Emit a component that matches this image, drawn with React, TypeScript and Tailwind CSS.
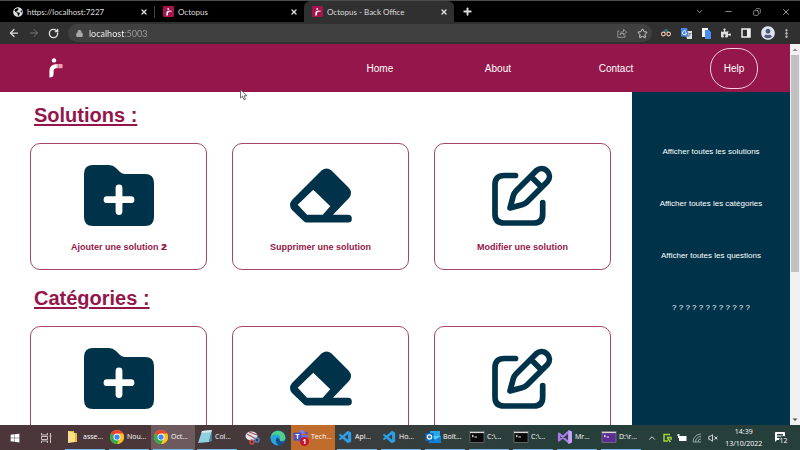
import type { ReactNode } from "react";
import {
  ArrowLeft,
  ArrowRight,
  RotateCw,
  Lock,
  X,
  Plus,
  Star,
  ChevronDown,
  ChevronUp,
  Minus,
  Copy,
  MoreVertical,
  VolumeX,
} from "lucide-react";
import { FaPuzzlePiece, FaUserCircle, FaWindows, FaGlobeAmericas } from "react-icons/fa";
import { VscVscode } from "react-icons/vsc";
import { MdMessage } from "react-icons/md";

function OctopusMark({ className }: { className: string }) {
  return (
    <svg viewBox="0 0 14 20" className={className} aria-hidden="true">
      <circle cx="5" cy="2.4" r="2.2" fill="#fff" />
      <path d="M0.400 19.500V13Q0.400 6 8.500 6V10Q4.800 10 4.600 13V16Q4.600 19.500 0.400 19.500Z" fill="#fff" />
      <path d="M7.500 6H9.400V10.200H7.500Z" fill="#d9b3c4" />
      <rect x="9.4" y="6" width="4.2" height="4.2" rx="0.8" fill="#f3a0ae" />
    </svg>
  );
}

function Favicon() {
  return (
    <span className="flex size-[11px] shrink-0 items-center justify-center rounded-[1px] bg-[#a3154e]">
      <OctopusMark className="h-2 w-[6px]" />
    </span>
  );
}

function BrowserTab({ icon, title, active }: { icon: ReactNode; title: string; active?: boolean }) {
  return (
    <div
      className={
        active
          ? "flex h-full w-[150px] items-center gap-1 rounded-t-md bg-[#303030] pr-[6px] pl-2"
          : "flex h-full w-[149px] items-center gap-1 pr-[6px] pl-2"
      }
    >
      {icon}
      <span className="flex-1 truncate">{title}</span>
      <button aria-label="Fermer l'onglet">
        <X size={8} strokeWidth={4} />
      </button>
    </div>
  );
}

function ChromeLogo() {
  return (
    <svg viewBox="0 0 16 16" className="size-[14px]" aria-hidden="true">
      <circle cx="8" cy="8" r="8" fill="#fbc116" />
      <path d="M8 8 1.1 4A8 8 0 0 1 14.9 4Z" fill="#ea4335" />
      <path d="M1.1 4A8 8 0 0 0 8 16L11.4 10 8 8Z" fill="#34a853" />
      <path d="M8 4H14.9A8 8 0 0 1 8 16L11.4 10Z" fill="#fbc116" />
      <circle cx="8" cy="8" r="4" fill="#fff" />
      <circle cx="8" cy="8" r="3" fill="#4285f4" />
    </svg>
  );
}

function FolderPlusIcon() {
  return (
    <svg viewBox="0 0 70 61" className="h-[61px] w-[70px]" aria-hidden="true">
      <path
        d="M9 0H25Q29 0 32 3L36 7Q38 9 41 9H61Q70 9 70 18V52Q70 61 61 61H9Q0 61 0 52V9Q0 0 9 0Z"
        fill="#003349"
      />
      <path d="M35 23V46.500M23 34.700H47" stroke="#fff" strokeWidth="6.800" strokeLinecap="round" />
    </svg>
  );
}

function EraserIcon() {
  return (
    <svg viewBox="0 -3.500 62 61" className="h-[61px] w-[62px]" aria-hidden="true">
      <path
        fillRule="evenodd"
        fill="#003349"
        d="M31.500 2Q36.700-2 41.500 2L59 19.500Q63 24.500 59 29.500L43 46.300H58A3.850 3.850 0 0 1 58 54H17Q15 54 13.500 52.500L2 41.500Q-2 36.500 2 31.500ZM23.300 21.300L7.700 36.300L17 46.300H32.700L40.300 37.700Z"
      />
    </svg>
  );
}

function EditIcon() {
  return (
    <svg
      viewBox="0 0 61 61"
      className="size-[61px]"
      fill="none"
      stroke="#003349"
      strokeWidth="5.700"
      strokeLinecap="round"
      strokeLinejoin="round"
      aria-hidden="true"
    >
      <path d="M23.500 10.500H12Q3 10.500 3 19.500V49Q3 58 12 58H42Q50.700 58 50.700 49V37.500" />
      <path d="M44.500 5.500L24 26Q22 28 21.200 31L18 43L30 39.800Q33 39 35 37L55.500 16.500A7.800 7.800 0 0 0 44.500 5.500ZM39 11.500L49.500 22" />
    </svg>
  );
}

function ActionCard({ icon, name, label }: { icon: ReactNode; name: string; label?: ReactNode }) {
  return (
    <button
      aria-label={name}
      className="flex h-[127px] flex-1 flex-col items-center gap-[15px] rounded-[10px] border border-[#a3476c] pt-[21px] text-[9px] leading-3 font-bold text-[#94164a]"
    >
      {icon}
      {label && <span>{label}</span>}
    </button>
  );
}

function Section({ title, children }: { title: string; children: ReactNode }) {
  return (
    <section>
      <h2 className="px-1 text-[20px] leading-6 font-bold text-[#94164a] underline decoration-2 underline-offset-2">
        {title}
      </h2>
      <div className="mt-4 flex gap-[25px]">{children}</div>
    </section>
  );
}

function TaskButton({ icon, label, tone }: { icon: ReactNode; label: string; tone?: "active" | "alert" }) {
  const base = "flex h-full w-11 shrink-0 px-[2px] ";
  const fill = tone === "alert" ? "bg-[#c06c2c]" : tone === "active" ? "bg-[#6c5a5e]" : "";
  const line = tone === "alert" ? "border-transparent" : "border-[#76b9ed]";
  return (
    <button className={base + fill}>
      <span className={"flex h-full flex-1 items-center gap-[2px] border-b " + line}>
        <span className="flex size-4 shrink-0 items-center justify-center">{icon}</span>
        <span>{label}</span>
      </span>
    </button>
  );
}

function FolderGlyph() {
  return (
    <svg viewBox="0 0 16 16" className="size-4" aria-hidden="true">
      <path d="M3 2H9V4H12V13H3Z" fill="#e8b93c" />
      <path d="M3 2L10 4V13L3 14Z" fill="#fbe08a" />
    </svg>
  );
}

function NotepadGlyph() {
  return (
    <svg viewBox="0 0 16 16" className="size-4" aria-hidden="true">
      <path d="M5 2L15 1L12 13L1 14Z" fill="#8fd0de" />
      <path d="M5 2L15 1L14.500 3.200L4.500 4Z" fill="#d9e6ea" />
      <path d="M12 13L15 1V12Z" fill="#4a8b9b" />
    </svg>
  );
}

function SnipGlyph() {
  return (
    <svg viewBox="0 0 16 16" className="size-4" aria-hidden="true">
      <ellipse cx="7.500" cy="6" rx="6" ry="4.500" fill="#dfe6ee" />
      <path d="M3 4L12 9M5 2L13 5" stroke="#a9505b" strokeWidth="1.200" />
      <circle cx="8" cy="12" r="2" fill="none" stroke="#d44a4a" strokeWidth="1.500" />
      <circle cx="13" cy="10" r="2" fill="none" stroke="#4a85c8" strokeWidth="1.500" />
    </svg>
  );
}

function EdgeGlyph() {
  return (
    <svg viewBox="0 0 16 16" className="size-4" aria-hidden="true">
      <circle cx="8" cy="8" r="7.500" fill="#1b7fd0" />
      <path d="M.6 7A7.500 7.500 0 0 1 15.500 8Q15 11 11 11Q9 11 9.500 9.500Q10.500 6 7 5.500Q3 5 .6 8Z" fill="#4fcf8e" />
      <path d="M.6 7.500Q3 3.500 7.500 4.800Q10.500 6 9.800 9Q8 6.500 6 8.500Q4.500 11 8 15.500A7.500 7.500 0 0 1 .6 7.500Z" fill="#26a5dc" />
      <path d="M6.200 8.500Q8 7 9.500 9.300Q9.500 12 14.500 11.500Q12.500 15 9 15.400Q5 12 6.200 8.500Z" fill="#14508f" />
    </svg>
  );
}

function TeamsGlyph() {
  return (
    <span className="relative flex size-4 items-center">
      <svg viewBox="0 0 16 16" className="size-4" aria-hidden="true">
        <circle cx="9" cy="3" r="2.200" fill="#7b83eb" />
        <circle cx="13.500" cy="4" r="1.500" fill="#5059c9" />
        <path d="M6 6H15V10Q14 13 11 13H6Z" fill="#6a72dd" />
        <rect x="0.500" y="3.500" width="8" height="8" fill="#4b53bc" />
        <path d="M2.500 5.500H6.500M4.500 5.500V10" stroke="#fff" strokeWidth="1.200" />
      </svg>
      <span className="absolute top-2 left-[7px] flex size-[9px] items-center justify-center rounded-full bg-[#c4162a] text-[7px] leading-[9px] font-bold">
        1
      </span>
    </span>
  );
}

function OutlookGlyph() {
  return (
    <svg viewBox="0 0 16 16" className="size-4" aria-hidden="true">
      <rect x="5" y="2" width="10" height="9" fill="#28a8ea" />
      <path d="M4 7H16V14H4Z" fill="#1382d6" />
      <path d="M5 7L10.500 10.500L16 7" fill="#50d0f5" />
      <rect x="0.500" y="4" width="8" height="8" fill="#0f6cbd" />
      <circle cx="4.500" cy="8" r="2.100" fill="none" stroke="#fff" strokeWidth="1.300" />
    </svg>
  );
}

function ConsoleGlyph({ color }: { color: string }) {
  return (
    <svg viewBox="0 0 16 16" className="size-4" aria-hidden="true">
      <rect x="1" y="2.500" width="14" height="11" fill={color} stroke="#8b8b8b" strokeWidth="0.600" />
      <path d="M1 3.500H15" stroke="#d8d8d8" strokeWidth="1.200" />
      <path d="M3 6L4.500 7L3 8M5.500 8H8" stroke="#fff" strokeWidth="0.900" fill="none" />
    </svg>
  );
}

function VisualStudioGlyph() {
  return (
    <svg viewBox="0 0 16 16" className="size-4" aria-hidden="true">
      <path d="M2 4.500L9.500 11.500L12 13.500V2.500L9.500 4.500L2 11.500Z" fill="none" stroke="#a67be8" strokeWidth="2.200" strokeLinejoin="round" />
      <path d="M11.500 1L15 2.500V13.500L11.500 15Z" fill="#c7a3f7" />
    </svg>
  );
}

function BrowserChrome() {
  return (
    <header className="shrink-0 font-['Lato','Open_Sans',sans-serif] text-[8px] text-[#dedede]">
      <div className="flex h-[22px] items-center border-t border-[#4c4c4c] bg-black pl-[5px]">
        <BrowserTab icon={<FaGlobeAmericas size={10} className="shrink-0" />} title="https://localhost:7227" />
        <span className="h-3 w-px bg-[#444]" />
        <BrowserTab icon={<Favicon />} title="Octopus" />
        <BrowserTab active icon={<Favicon />} title="Octopus - Back Office" />
        <button aria-label="Nouvel onglet" className="ml-2">
          <Plus size={11} strokeWidth={4} />
        </button>
        <div className="ml-auto flex items-center gap-5 pr-[9px] text-[#bbb]">
          <button aria-label="Rechercher dans les onglets"><ChevronDown size={9} /></button>
          <button aria-label="Réduire"><Minus size={9} /></button>
          <button aria-label="Restaurer"><Copy size={8} className="-scale-x-100" /></button>
          <button aria-label="Fermer"><X size={10} /></button>
        </div>
      </div>
      <div className="flex h-[22px] items-center bg-[#303030] pr-2 pl-2">
        <div className="flex w-[60px] items-center gap-2">
          <button aria-label="Précédent"><ArrowLeft size={12} strokeWidth={2.5} /></button>
          <button aria-label="Suivant" className="text-[#777]"><ArrowRight size={12} /></button>
          <button aria-label="Actualiser"><RotateCw size={11} strokeWidth={3} /></button>
        </div>
        <div className="flex h-[18px] flex-1 items-center gap-[6px] rounded-full bg-[#404040] pr-1 pl-2">
          <Lock size={7} strokeWidth={4} fill="#aaa" className="text-[#aaa]" />
          <input
            aria-label="Adresse"
            defaultValue="localhost:5003"
            className="h-4 min-w-0 flex-1 bg-linear-to-r from-white from-[35px] to-[#a0a0a0] to-[35px] bg-clip-text text-[9px] text-transparent outline-none"
          />
          <button aria-label="Partager">
            <svg viewBox="0 0 10 10" className="size-[10px]" fill="none" stroke="#aaa" aria-hidden="true">
              <path d="M2.500 3H.8V9.300H8V7M3 7Q3 3.500 6.500 3.500V1.300L9.500 4.200L6.500 7V5.200Q4 5.200 3 7Z" strokeWidth="0.800" />
            </svg>
          </button>
          <button aria-label="Favori" className="ml-1"><Star size={11} /></button>
        </div>
        <div className="ml-[9px] flex items-center gap-[10px]">
          <svg viewBox="0 0 10 8" className="h-2 w-[10px]" aria-hidden="true">
            <path d="M2.500 3L4 0H6.500L7.500 3Z" fill="#2d6e6e" />
            <circle cx="2.400" cy="5" r="1.800" fill="#222" stroke="#f0c3b0" strokeWidth="1.200" />
            <circle cx="7.600" cy="5" r="1.800" fill="#222" stroke="#f0c3b0" strokeWidth="1.200" />
          </svg>
          <svg viewBox="0 0 11 11" className="size-[11px]" aria-hidden="true">
            <path d="M4 3H11V11H6Z" fill="#dcdcdc" />
            <path d="M0 0H6L8 8.500H0Z" fill="#4a86e8" />
            <path d="M5 3.500A2 2 0 1 0 5.500 5H4" fill="none" stroke="#fff" strokeWidth="0.900" />
            <path d="M7.500 5.500H10.500M9 5.500Q9 8 7.500 9" fill="none" stroke="#666" strokeWidth="0.700" />
          </svg>
          <svg viewBox="0 0 9 11" className="h-[11px] w-[9px]" aria-hidden="true">
            <path d="M0 0H6V9H0Z" fill="#f3f6fa" />
            <path d="M3 2H7L9 4V11H3Z" fill="#4a8df0" />
          </svg>
          <button aria-label="Extensions"><FaPuzzlePiece size={10} /></button>
          <svg viewBox="0 0 10 10" className="size-[10px]" aria-hidden="true">
            <rect x="1" y="1" width="8" height="8" fill="none" stroke="#eee" strokeWidth="1.500" />
            <path d="M6 1H9V9H6Z" fill="#eee" />
          </svg>
          <button aria-label="Profil" className="rounded-full bg-[#4d5a78] text-[#dfe3ee]"><FaUserCircle size={14} /></button>
          <button aria-label="Menu" className="-ml-1"><MoreVertical size={11} strokeWidth={3} /></button>
        </div>
      </div>
    </header>
  );
}

function Taskbar() {
  return (
    <footer className="flex h-[25px] shrink-0 items-center bg-linear-to-r from-[#4b363a] from-20% via-[#3a3d3d] via-45% to-[#263f3b] to-70% font-['Open_Sans','Noto_Sans',sans-serif] text-[7px] whitespace-nowrap text-white">
      <button aria-label="Démarrer" className="flex w-[30px] justify-center"><FaWindows size={10} /></button>
      <button aria-label="Vue des tâches" className="flex w-[33px] justify-center">
        <svg viewBox="0 0 11 10" className="h-[10px] w-[11px]" fill="none" stroke="#c8c0c2" aria-hidden="true">
          <path d="M.5 0V2H6.500V0M.5 10V8H6.500V10M.5 3.500H6.500V6.500H.5ZM9.500 0V10M8.500 3H10.500" />
        </svg>
      </button>
      <TaskButton icon={<FolderGlyph />} label="asse..." />
      <TaskButton icon={<ChromeLogo />} label="Nou..." />
      <TaskButton icon={<ChromeLogo />} label="Oct..." tone="active" />
      <TaskButton icon={<NotepadGlyph />} label="Col..." />
      <button aria-label="Capture d'écran" className="flex w-[26px] justify-center"><SnipGlyph /></button>
      <button aria-label="Edge" className="flex w-[26px] justify-center"><EdgeGlyph /></button>
      <TaskButton icon={<TeamsGlyph />} label="Tech..." tone="alert" />
      <TaskButton icon={<VscVscode size={15} color="#2c9fe8" />} label="Api..." />
      <TaskButton icon={<VscVscode size={15} color="#2c9fe8" />} label="Ho..." />
      <TaskButton icon={<OutlookGlyph />} label="Boît..." />
      <TaskButton icon={<ConsoleGlyph color="#0a0a0a" />} label="C:\..." />
      <TaskButton icon={<ConsoleGlyph color="#0a0a0a" />} label="C:\..." />
      <TaskButton icon={<VisualStudioGlyph />} label="Mr..." />
      <TaskButton icon={<ConsoleGlyph color="#5c2d91" />} label="D:\r..." />
      <div className="flex flex-1 items-center justify-between pr-3 pl-1">
        <ChevronUp size={10} />
        <svg viewBox="0 0 10 10" className="size-[10px]" fill="none" stroke="#a5d43a" strokeWidth="1.500" aria-hidden="true">
          <path d="M8 1.500H2V8H6M5 4.500H9V7M5 4.500L8.500 9" />
        </svg>
        <svg viewBox="0 0 10 8" className="h-2 w-[10px]" aria-hidden="true">
          <path d="M2 2H9.500V7H2Z" fill="#fff" />
          <path d="M0 1H3M1.500 0V4" stroke="#fff" />
        </svg>
        <svg viewBox="0 0 10 10" className="size-[10px]" fill="none" stroke="#9fb0ad" strokeWidth="0.900" aria-hidden="true">
          <path d="M1 9A8 8 0 0 1 9 1M3.500 9A5.500 5.500 0 0 1 9 3.500M6 9A3 3 0 0 1 9 6M1 9H9" />
        </svg>
        <VolumeX size={10} />
        <div className="w-[42px] text-center leading-[12px]">
          <div>14:39</div>
          <div>13/10/2022</div>
        </div>
        <button aria-label="Notifications" className="relative ml-1 flex size-[14px]">
          <MdMessage size={12} />
          <span className="absolute right-0 bottom-0 flex h-[9px] w-[9px] items-center justify-center rounded-full bg-[#263f3b] leading-[9px]">
            12
          </span>
        </button>
      </div>
    </footer>
  );
}

export default function App() {
  return (
    <div className="relative flex h-screen flex-col overflow-hidden bg-white font-['Liberation_Sans',Arial,sans-serif]">
      <BrowserChrome />
      <div className="flex min-h-0 flex-1">
        <div className="flex min-w-0 flex-1 flex-col">
          <div className="flex h-12 shrink-0 items-center justify-between bg-[#94164a] text-[10px] text-white">
            <a href="#accueil" aria-label="Octopus" className="ml-[49px]"><OctopusMark className="h-5 w-[14px]" /></a>
            <nav className="grid w-[59%] grid-cols-4 items-center justify-items-center gap-[6px]">
              <a href="#home">Home</a>
              <a href="#about">About</a>
              <a href="#contact">Contact</a>
              <a href="#help" className="flex h-[41px] w-12 items-center justify-center rounded-[20px] border border-[#f3cfdd]">
                Help
              </a>
            </nav>
          </div>
          <div className="flex min-h-0 flex-1">
            <main className="flex flex-1 flex-col gap-4 overflow-hidden pt-[11px] pr-[21px] pl-[30px]">
              <Section title="Solutions :">
                <ActionCard
                  icon={<FolderPlusIcon />}
                  name="Ajouter une solution 2"
                  label={
                    <>
                      Ajouter une solution <span className="[text-shadow:1px_0_#94164a]">2</span>
                    </>
                  }
                />
                <ActionCard icon={<EraserIcon />} name="Supprimer une solution" label="Supprimer une solution" />
                <ActionCard icon={<EditIcon />} name="Modifier une solution" label="Modifier une solution" />
              </Section>
              <Section title="Catégories :">
                <ActionCard icon={<FolderPlusIcon />} name="Ajouter une catégorie" />
                <ActionCard icon={<EraserIcon />} name="Supprimer une catégorie" />
                <ActionCard icon={<EditIcon />} name="Modifier une catégorie" />
              </Section>
            </main>
            <aside className="flex w-1/5 flex-col items-center gap-10 bg-[#003349] pt-[54px] text-[8px] leading-3 text-white">
              <a href="#solutions">Afficher toutes les solutions</a>
              <a href="#categories">Afficher toutes les catégories</a>
              <a href="#questions">Afficher toutes les questions</a>
              <a href="#autres">? ? ? ? ? ? ? ? ? ? ? ?</a>
            </aside>
          </div>
        </div>
        <div className="flex w-[10px] flex-col items-center bg-[#f1f1f1]">
          <svg viewBox="0 0 10 11" className="h-[11px] w-[10px]" aria-hidden="true">
            <path d="M2.500 7L5 4.500L7.500 7Z" fill="#8a8a8a" />
          </svg>
          <div className="h-[57%] w-2 bg-[#c1c1c1]" />
          <svg viewBox="0 0 10 11" className="mt-auto h-[11px] w-[10px]" aria-hidden="true">
            <path d="M2.500 4.500L5 7L7.500 4.500Z" fill="#505050" />
          </svg>
        </div>
      </div>
      <Taskbar />
      <svg viewBox="0 0 8 12" className="absolute top-[89px] left-[240px] h-3 w-2" aria-hidden="true">
        <path d="M.5.5V9L2.500 7.200L4 10.800L5.500 10.200L4 6.800H7Z" fill="#fff" stroke="#333" strokeWidth="0.700" />
      </svg>
    </div>
  );
}
